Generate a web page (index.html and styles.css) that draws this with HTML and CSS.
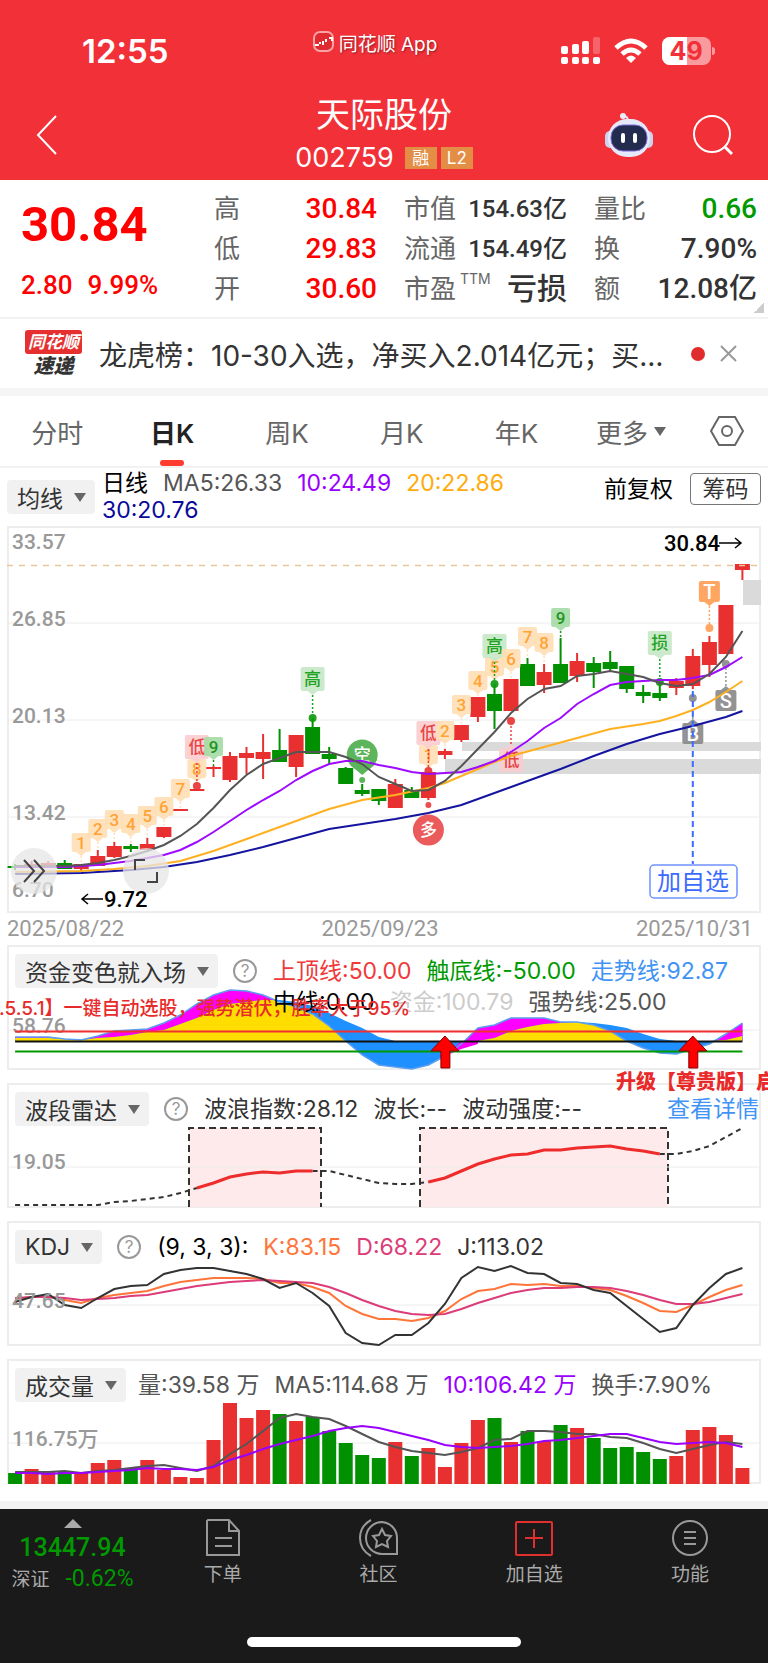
FILE: index.html
```html
<!DOCTYPE html>
<html lang="zh-CN">
<head>
    <meta charset="UTF-8">
    <meta name="viewport" content="width=device-width, initial-scale=1.0">
    <title>天际股份 002759</title>
    <link rel="stylesheet" href="styles.css">
</head>
<body>
    <header class="top">
        <div class="status-bar">
            <span class="time">12:55</span>
            <span class="app-name">
                <svg width="22" height="22" viewBox="0 0 22 22"><rect x="1" y="1" width="19" height="19" rx="6" fill="#e02a2f" stroke="#f9a3a5" stroke-width="2"/><path d="M2 14h4M7 11v2M10 10v4M13 8v3M16 7h3v3" fill="none" stroke="#fff" stroke-width="2"/></svg>
                同花顺 App
            </span>
            <span class="status-icons">
                <svg width="39" height="28" viewBox="0 0 39 28" fill="#fff"><rect y="9" width="7" height="8" rx="2"/><rect x="11" y="7" width="7" height="10" rx="2"/><rect x="21" y="4" width="7" height="13" rx="2"/><rect x="32" y="0" width="7" height="17" rx="2" opacity=".25"/><rect y="20" width="7" height="7" rx="2"/><rect x="11" y="20" width="7" height="7" rx="2"/><rect x="21" y="20" width="7" height="7" rx="2"/><rect x="32" y="20" width="7" height="7" rx="2"/></svg>
                <svg width="34" height="26" viewBox="0 0 34 26"><g fill="none" stroke="#fff" stroke-width="5"><path d="M2 10Q17-4 32 10"/><path d="M8 16Q17 8 26 16"/></g><path d="M17 25l-5-5q5-5 10 0z" fill="#fff"/></svg>
                <span class="battery"><b>4</b><b>9</b></span>
            </span>
        </div>
        <div class="title-bar">
            <button class="icon-btn" aria-label="返回">
                <svg width="24" height="42" viewBox="0 0 24 42"><path d="M21 2L3 21l18 19" fill="none" stroke="#fff" stroke-width="2"/></svg>
            </button>
            <div class="stock">
                <h1>天际股份</h1>
                <div class="stock-code">002759 <i>融</i><i>L2</i></div>
            </div>
            <div class="title-actions">
                <button class="icon-btn" aria-label="助手">
                    <svg width="48" height="46" viewBox="0 0 48 46"><path d="M23 9q0-5-5-5" fill="none" stroke="#dfe3f8" stroke-width="2"/><circle cx="18" cy="4" r="3" fill="#e9ecfb"/><rect x="0" y="19" width="10" height="17" rx="5" fill="#cdd3ee"/><rect x="38" y="19" width="10" height="17" rx="5" fill="#cdd3ee"/><rect x="3" y="7" width="42" height="38" rx="19" fill="#e6e9fa"/><rect x="6" y="13" width="36" height="26" rx="12" fill="#232c4e" stroke="#7b6bd8" stroke-width="1"/><rect x="16" y="21" width="4" height="10" rx="2" fill="#fff"/><rect x="28" y="21" width="4" height="10" rx="2" fill="#fff"/></svg>
                </button>
                <button class="icon-btn" aria-label="搜索">
                    <svg width="40" height="42" viewBox="0 0 40 42"><circle cx="19" cy="20" r="18" fill="none" stroke="#fff" stroke-width="2"/><path d="M32 33l7 7" stroke="#fff" stroke-width="3"/></svg>
                </button>
            </div>
        </div>
    </header>

    <section class="quote">
        <div class="price din">
            <strong>30.84</strong>
            <span>2.80</span><span>9.99%</span>
        </div>
        <dl class="q1 up"><dt>高</dt><dd>30.84</dd><dt>低</dt><dd>29.83</dd><dt>开</dt><dd>30.60</dd></dl>
        <dl class="q2"><dt>市值</dt><dd>154.63亿</dd><dt>流通</dt><dd>154.49亿</dd><dt>市盈<sup>TTM</sup></dt><dd class="big">亏损</dd></dl>
        <dl class="q3"><dt>量比</dt><dd class="down">0.66</dd><dt>换</dt><dd>7.90%</dd><dt>额</dt><dd>12.08亿</dd></dl>
    </section>

    <section class="news">
        <div class="news-logo"><b>同花顺</b><em>速递</em></div>
        <a href="#">龙虎榜：10-30入选，净买入2.014亿元；买…</a>
        <span class="dot"></span>
        <button class="icon-btn" aria-label="关闭">
            <svg width="17" height="17" viewBox="0 0 17 17"><path d="M1 1l15 15M16 1L1 16" stroke="#999" stroke-width="2"/></svg>
        </button>
    </section>

    <nav class="tabs">
        <a href="#">分时</a>
        <a href="#" class="active">日K</a>
        <a href="#">周K</a>
        <a href="#">月K</a>
        <a href="#">年K</a>
        <a href="#" class="more">更多</a>
        <a href="#" aria-label="设置">
            <svg width="34" height="30" viewBox="0 0 34 30" fill="none" stroke="#666" stroke-width="2"><path d="M9 1h16l8 14-8 14H9L1 15z"/><circle cx="17" cy="15" r="5"/></svg>
        </a>
    </nav>

    <main>
        <div class="ma-bar">
            <button class="pick">均线</button>
            <p class="legend">
                <span class="c-black">日线</span><span class="c-gray">MA5:26.33</span><span class="c-purple">10:24.49</span><span class="c-orange">20:22.86</span><span class="c-navy">30:20.76</span>
            </p>
            <span class="adjust">前复权</span>
            <button class="chips">筹码</button>
        </div>

        <section class="panel">
            <svg id="kline" class="chart" viewBox="7 525 754 387"></svg>
        </section>
        <div class="dates"><span>2025/08/22</span><span>2025/09/23</span><span>2025/10/31</span></div>

        <section class="panel">
            <svg id="fund" class="chart" viewBox="7 944 754 125"></svg>
            <div class="panel-head">
                <button class="pick">资金变色就入场</button>
                <button class="help">?</button>
                <p class="legend">
                    <span class="c-red">上顶线:50.00</span><span class="c-green">触底线:-50.00</span><span class="c-blue">走势线:92.87</span><span class="c-black">中线:0.00</span><span class="c-light">资金:100.79</span><span class="c-gray">强势线:25.00</span>
                </p>
            </div>
            <p class="ad ad-left">.5.5.1】一键自动选股，强势潜伏，胜率大于95%</p>
        </section>

        <section class="panel">
            <svg id="radar" class="chart" viewBox="7 1083 754 125"></svg>
            <div class="panel-head">
                <button class="pick">波段雷达</button>
                <button class="help">?</button>
                <p class="legend c-dark"><span>波浪指数:28.12</span><span>波长:--</span><span>波动强度:--</span></p>
                <a href="#" class="detail">查看详情</a>
            </div>
            <p class="ad ad-right">升级【尊贵版】启</p>
        </section>

        <section class="panel">
            <svg id="kdj" class="chart" viewBox="7 1220 754 125"></svg>
            <div class="panel-head">
                <button class="pick">KDJ</button>
                <button class="help">?</button>
                <p class="legend"><span class="c-black">(9, 3, 3):</span><span class="c-coral">K:83.15</span><span class="c-pink">D:68.22</span><span class="c-dark">J:113.02</span></p>
            </div>
        </section>

        <section class="panel">
            <svg id="volume" class="chart" viewBox="7 1358 754 125"></svg>
            <div class="panel-head">
                <button class="pick">成交量</button>
                <p class="legend c-gray"><span>量:39.58 万</span><span>MA5:114.68 万</span><span class="c-purple">10:106.42 万</span><span>换手:7.90%</span></p>
            </div>
        </section>
    </main>

    <footer class="bottom">
        <nav>
            <a href="#" class="index din">
                <i></i>
                <strong>13447.94</strong>
                <span><small>深证</small>-0.62%</span>
            </a>
            <a href="#">
                <svg width="36" height="38" viewBox="0 0 36 38" fill="none" stroke="#999" stroke-width="2"><path d="M3 1h21l10 11v24H2V2z"/><path d="M24 1v11h10M10 19h17M10 27h17"/></svg>
                下单
            </a>
            <a href="#">
                <svg width="42" height="38" viewBox="0 0 42 38" fill="none" stroke="#999" stroke-width="2"><path d="M13 1Q2 7 2 19t11 18"/><path d="M24 3a16 16 0 1 0 0 32h15V19A16 16 0 0 0 24 3z"/><path d="M24 10l3 6 6 1-4 5 1 6-6-3-6 3 1-6-4-5 6-1z"/></svg>
                社区
            </a>
            <a href="#">
                <svg width="38" height="38" viewBox="0 0 38 38" fill="none" stroke="#e02f2f" stroke-width="2"><rect x="1" y="3" width="36" height="33" rx="1"/><path d="M19 10v19M10 19h18"/></svg>
                加自选
            </a>
            <a href="#">
                <svg width="36" height="38" viewBox="0 0 36 38" fill="none" stroke="#999" stroke-width="2"><circle cx="18" cy="19" r="17"/><path d="M12 13h12M12 19h12M12 25h12"/></svg>
                功能
            </a>
        </nav>
        <div class="home-bar"></div>
    </footer>

    <script src="charts.js"></script>
</body>
</html>
```

FILE: styles.css
```css
* {
    box-sizing: border-box;
}
body {
    margin: 0;
    font-family: Inter, "Noto Sans CJK SC", sans-serif;
    background: #fff;
    color: #333;
    overflow-x: hidden;
}
h1, p, dl, dd {
    margin: 0;
}
a {
    color: inherit;
    text-decoration: none;
}
button {
    font: inherit;
    color: inherit;
    border: none;
    background: none;
    padding: 0;
    cursor: pointer;
}
svg {
    display: block;
}
.icon-btn {
    display: flex;
}
.din {
    font-family: Roboto, "Noto Sans CJK SC", sans-serif;
}

/* header */
.top {
    background: #f23038;
    color: #fff;
    padding-bottom: 6px;
}
.status-bar {
    display: grid;
    grid-template-columns: 1fr auto 1fr;
    align-items: center;
    height: 96px;
    padding: 6px 57px 0 39px;
}
.time {
    margin-left: 43px;
    font-size: 33px;
    font-weight: 600;
}
.app-name {
    display: flex;
    align-items: center;
    gap: 4px;
    font-size: 19px;
    padding-bottom: 18px;
    text-shadow: 1px 1px 2px rgba(0,0,0,0.4);
}
.status-icons {
    display: flex;
    justify-content: flex-end;
    align-items: center;
    gap: 14px;
}
.battery {
    display: flex;
    position: relative;
    width: 49px;
    height: 28px;
    line-height: 28px;
    border-radius: 8px;
    color: #f23038;
    font-size: 25px;
    background: #f99a9e;
}
.battery::after {
    content: "";
    position: absolute;
    right: -4px;
    top: 10px;
    width: 3px;
    height: 8px;
    border-radius: 0 3px 3px 0;
    background: #f99a9e;
}
.battery b {
    width: 25px;
}
.battery b:first-child {
    background: #fff;
    border-radius: 8px 0 0 8px;
    text-align: right;
}
.title-bar {
    display: grid;
    grid-template-columns: 1fr auto 1fr;
    align-items: center;
    height: 78px;
    padding: 0 35px;
}
.stock {
    margin: -8px 0;
    text-align: center;
}
.stock h1 {
    font-size: 34px;
    line-height: 46px;
    font-weight: 400;
}
.stock-code {
    display: flex;
    align-items: center;
    justify-content: center;
    gap: 4px;
    font-size: 27px;
    line-height: 40px;
}
.stock-code i {
    width: 32px;
    height: 22px;
    font-size: 17px;
    line-height: 22px;
    font-style: normal;
    background: #e48d45;
}
.stock-code i:first-of-type {
    margin-left: 7px;
}
.title-actions {
    display: flex;
    align-items: center;
    justify-content: flex-end;
    gap: 40px;
}

/* quote */
.quote {
    display: grid;
    grid-template-columns: 1fr repeat(3, 163px);
    column-gap: 27px;
    padding: 9px 11px 8px 21px;
    border-bottom: 2px solid #f2f2f2;
    background: linear-gradient(135deg, transparent 50%, #ccc 50%) right 4px bottom 4px / 10px 10px no-repeat;
}
.price {
    color: #f00;
    white-space: nowrap;
}
.price strong {
    display: block;
    font-size: 49px;
    line-height: 72px;
}
.price span {
    font-size: 26px;
    line-height: 48px;
    font-weight: 500;
    margin-right: 15px;
}
.quote dl {
    display: grid;
    grid-template-columns: auto 1fr;
    grid-auto-rows: 40px;
    line-height: 40px;
    white-space: nowrap;
}
.quote dt {
    position: relative;
    color: #666;
    font-size: 26px;
}
.quote sup {
    position: absolute;
    left: 100%;
    top: 0;
    margin-left: 4px;
    font-size: 14px;
    line-height: 20px;
}
.quote dd {
    font-family: Roboto, "Noto Sans CJK SC", sans-serif;
    font-size: 28px;
    font-weight: 500;
    text-align: right;
}
.quote .q2 dd {
    font-size: 24px;
}
.quote .q2 .big {
    font-size: 30px;
}
.up dd {
    color: #f00;
}
.quote .down {
    color: #090;
}

/* news */
.news {
    display: flex;
    align-items: center;
    height: 77px;
    padding: 0 31px 0 25px;
    border-bottom: 8px solid #f5f5f5;
}
.news-logo {
    width: 57px;
    margin-right: 17px;
    text-align: center;
}
.news-logo b {
    display: block;
    background: #e63030;
    color: #fff;
    font-size: 17px;
    line-height: 24px;
    font-style: italic;
    border-radius: 3px;
}
.news-logo em {
    display: block;
    font-size: 20px;
    line-height: 24px;
    font-weight: 900;
}
.news a {
    flex: 1;
    font-size: 28px;
    white-space: nowrap;
}
.dot {
    width: 14px;
    height: 14px;
    margin: 0 15px 0 24px;
    border-radius: 50%;
    background: #e02c2c;
}

/* tabs */
.tabs {
    display: grid;
    grid-template-columns: repeat(6, 15%) 1fr;
    height: 72px;
    padding-right: 3px;
    border-bottom: 2px solid #f2f2f2;
    font-size: 26px;
    color: #666;
}
.tabs a {
    display: flex;
    align-items: center;
    justify-content: center;
    position: relative;
}
.tabs .active {
    color: #222;
    font-weight: 600;
}
.tabs .active::after {
    content: "";
    position: absolute;
    bottom: 0;
    width: 24px;
    height: 6px;
    border-radius: 3px;
    background: #ff3b30;
}
.more::after,
.pick::after {
    content: "";
    border: 6px solid transparent;
    border-top: 9px solid #666;
    border-bottom: none;
    margin-left: 6px;
}

/* indicator header rows */
main {
    padding: 0 7px;
}
.pick {
    display: flex;
    align-items: center;
    height: 34px;
    padding: 0 9px 0 10px;
    font-size: 23px;
    color: #333;
    background: #f1f1f1;
    border-radius: 4px;
    white-space: nowrap;
}
.pick::after {
    margin-left: 11px;
}
.legend {
    display: flex;
    flex-wrap: wrap;
    column-gap: 15px;
    font-size: 23px;
    line-height: 31px;
}
.ma-bar {
    display: flex;
    align-items: center;
    height: 58px;
}
.ma-bar .legend {
    flex: 1;
    margin-left: 7px;
    padding-right: 30px;
    line-height: 27px;
}
.adjust {
    margin: 0 17px 20px 0;
    font-size: 23px;
    color: #000;
}
.chips {
    width: 71px;
    height: 32px;
    margin-bottom: 16px;
    font-size: 23px;
    line-height: 28px;
    border: 1px solid #777;
    border-radius: 4px;
}

/* panels: the chart and its header share one grid cell */
.panel {
    display: grid;
    position: relative;
    margin-bottom: 13px;
    box-shadow: inset 0 0 0 2px #ededed;
}
.panel > .chart,
.panel > .panel-head {
    grid-area: 1 / 1;
}
.chart {
    width: 100%;
    height: auto;
}
.panel-head {
    display: flex;
    align-items: flex-start;
    padding: 9px 2px 0 8px;
}
.panel-head .legend {
    flex: 1;
    margin: 2px 0 0 16px;
}
.panel-head .pick + .legend {
    margin-left: 12px;
}
.help {
    width: 24px;
    height: 24px;
    margin: 5px 0 0 15px;
    border: 2px solid #999;
    border-radius: 50%;
    color: #999;
    font-size: 17px;
    line-height: 20px;
}
.detail {
    font-size: 23px;
    line-height: 34px;
    color: #4193f5;
}
.dates {
    display: flex;
    justify-content: space-between;
    margin-top: -13px;
    font-family: Roboto, sans-serif;
    font-size: 22px;
    line-height: 32px;
    color: #999;
    padding-right: 8px;
}
.ad {
    position: absolute;
    color: #e92a2a;
    font-size: 19px;
    font-weight: 500;
    line-height: 24px;
    white-space: nowrap;
}
.ad-left {
    left: -8px;
    top: 52px;
}
.ad-right {
    left: 609px;
    top: -13px;
    font-size: 20px;
    font-weight: 900;
}
.c-black { color: #000; }
.c-dark { color: #333; }
.c-gray { color: #555; }
.c-light { color: #ccc; }
.c-purple { color: #90f; }
.c-orange { color: #ffab0a; }
.c-navy { color: #0a0a9a; }
.c-red { color: #f03a3a; }
.c-green { color: #090; }
.c-blue { color: #4193f5; }
.c-coral { color: #ff7438; }
.c-pink { color: #dc3c78; }

/* chart text */
.axis {
    font: 500 21px Roboto, "Noto Sans CJK SC", sans-serif;
    fill: #999;
}
.mark {
    font: 500 22px Roboto, sans-serif;
}
.tag-text {
    font: 500 17px Roboto, "Noto Sans CJK SC", sans-serif;
    text-anchor: middle;
}
.tag-text.letter {
    font-size: 20px;
}

/* bottom bar */
.bottom {
    height: 163px;
    margin-top: 17px;
    border-top: 8px solid #f3f3f3;
    background: #1a1a1a;
    color: #aaa;
}
.bottom nav {
    display: grid;
    grid-template-columns: 145px repeat(4, 1fr);
    height: 128px;
}
.bottom a {
    display: flex;
    flex-direction: column;
    align-items: center;
    gap: 4px;
    padding-top: 10px;
    font-size: 19px;
    line-height: 28px;
}
.bottom .index {
    gap: 0;
    color: #090;
}
.index i {
    border: 9px solid transparent;
    border-bottom: 9px solid #aaa;
    border-top: none;
}
.index strong {
    font-size: 25px;
    line-height: 40px;
    font-weight: 500;
}
.index span {
    font-size: 23px;
    line-height: 22px;
}
.index small {
    margin-right: 16px;
    font-size: 19px;
    color: #aaa;
}
.home-bar {
    width: 274px;
    height: 10px;
    margin: 0 auto;
    border-radius: 5px;
    background: #fff;
}
```

FILE: charts.js
```js
// All panels share one coordinate space, each svg shows its slice through its viewBox.
const RED = '#e83030', GREEN = '#009000';
const STEP = 16.53, X0 = 15.1;
const LEFT = 7, RIGHT = 761;

const x = i => +(X0 + i * STEP).toFixed(1);

function line(ys, color, width = 2, from = 0, dash = '') {
    const pts = ys.map((y, i) => `${x(i + from)},${y}`).join(' ');
    return `<polyline points="${pts}" fill="none" stroke="${color}" stroke-width="${width}" stroke-dasharray="${dash}"/>`;
}
// sparse series: [index, y] pairs
function curve(pairs, color) {
    return `<polyline points="${pairs.map(p => x(p[0]) + ',' + p[1]).join(' ')}" fill="none" stroke="${color}" stroke-width="2"/>`;
}
function grid(y) {
    return `<path d="M${LEFT} ${y}H${RIGHT}" stroke="#ececec"/>`;
}
function rect(x1, y1, w, h, fill, extra = '') {
    return `<rect x="${x1}" y="${y1}" width="${w}" height="${h}" fill="${fill}" ${extra}/>`;
}
function axis(y, text) {
    return `<text class="axis" x="12" y="${y}">${text}</text>`;
}

// ---- K line ----
// [up, bodyTop, bodyBottom, high, low]
const candles = [
    [0,865,867,863,869],[1,863,865,860,866],[1,862,864,860,865],[0,862,868,859,868],[1,863,868,863,870],
    [1,855,865,849,865],[1,845,856,841,857],[0,845,848,843,851],[1,843,849,837,849],[1,826,836,826,837],
    [1,808,810,808,810],[1,788,790,788,790],[1,766,768,765,776],[1,755,779,751,781],[1,752,757,746,773],
    [1,751,758,733,778],[0,749,761,728,761],[1,734,766,734,776],[0,726,753,717,753],[0,753,758,746,763],
    [0,767,783,766,783],[0,789,793,783,795],[0,788,800,788,804],[1,783,807,778,807],[0,789,797,786,797],
    [1,771,797,771,799],[1,750,754,748,758],[1,724,739,724,741],[1,696,716,696,721],[0,693,710,683,728],
    [1,678,710,678,710],[0,663,685,657,685],[1,671,684,663,692],[0,663,682,637,682],[1,660,675,652,681],
    [0,662,671,656,687],[0,661,668,650,670],[0,665,688,665,692],[0,691,695,684,702],[0,692,697,681,700],
    [1,680,687,677,694],[1,655,685,648,688],[1,641,664,635,676],[1,604,653,604,653],[1,563,569,563,579]
];
const ma5 = [865,865,865,865,864,862,859,855,850,844,835,823,807,789,774,763,757,751,751,751,756,763,776,783,790,789,780,765,748,731,712,698,688,685,675,673,670,673,676,682,685,683,673,656,630];
const ma10 = [866,866,866,866,865,864,862,860,857,854,849,841,831,820,809,799,790,779,770,763,760,760,764,767,771,773,772,771,766,760,751,740,727,717,703,693,684,681,680,679,679,677,674,666,656];
const ma20 = [[0,871],[4,870],[6,868],[8,865],[10,860],[12,850],[13,844],[15,832],[17,820],[19,808],[21,799],[23,794],[25,787],[26,782],[27,775],[28,768],[29,761],[30,755],[32,746],[34,737],[36,728],[38,723],[39,720],[40,715],[41,709],[42,701],[43,691],[44,680]];
const ma30 = [[0,873],[4,872],[7,869],[9,866],[11,861],[13,854],[15,846],[17,837],[19,828],[21,823],[23,818],[25,812],[27,804],[29,792],[31,780],[33,768],[35,755],[37,743],[39,733],[41,725],[43,716],[44,710]];

const TAGS = {
    num: ['#ffdfb5', '#ff9a1f', 19],
    high: ['#c6e8c6', '#0a9a0a', 24],
    nine: ['#a5dba5', '#0a8a0a', 19],
    low: ['#fbcdd0', '#e83030', 24],
    trade: ['#ff9d52', '#fff', 21],
    gray: ['#888', '#fff', 21]
};

// label box over (or under) a candle, dotted leader to y = end
function tag(i, top, text, kind, end, dot = false, below = false) {
    const [bg, fg, w] = TAGS[kind];
    const cx = x(i);
    const letter = fg === '#fff';
    const lead = letter || kind === 'num' ? bg : fg;
    const edge = below ? top : top + w;
    const tip = below ? edge - 4 : edge + 4;
    return `<g opacity=".9">
        <path d="M${cx} ${tip}V${end}" stroke="${lead}" stroke-width="1.5" stroke-dasharray="2 2"/>
        ${rect(cx - w / 2, top, w, w, bg, 'rx="2"')}
        <path d="M${cx - 5} ${edge}H${cx + 5}L${cx} ${tip}z" fill="${bg}"/>
        <text class="tag-text ${letter ? 'letter' : ''}" x="${cx}" y="${top + w / 2 + (letter ? 7 : 6)}" fill="${fg}">${text}</text>
        ${dot ? `<circle cx="${cx}" cy="${end}" r="4" fill="${lead}"/>` : ''}
    </g>`;
}

function drawKline() {
    let s = [622, 719, 816].map(grid).join('');
    s += axis(548, '33.57') + axis(625, '26.85') + axis(722, '20.13') + axis(819, '13.42') + axis(896, '6.70');
    s += rect(462, 741, 299, 9, '#dadada') + rect(445, 758, 316, 15, '#dadada') + rect(743, 579, 18, 25, '#dadada');

    candles.forEach(([up, top, bottom, high, low], i) => {
        const c = up ? RED : GREEN;
        s += `<path d="M${x(i)} ${high}V${low}" stroke="${c}" stroke-width="2"/>`;
        s += rect(x(i) - 7.5, top, 15, bottom - top, c);
    });

    s += tag(4, 832, '1', 'num', 863) + tag(5, 818, '2', 'num', 849) + tag(6, 809, '3', 'num', 841)
       + tag(7, 813, '4', 'num', 843) + tag(8, 805, '5', 'num', 837) + tag(9, 796, '6', 'num', 826)
       + tag(10, 778, '7', 'num', 808) + tag(11, 758, '8', 'num', 785)
       + tag(11, 734, '低', 'low', 785, true) + tag(12, 736, '9', 'nine', 765)
       + tag(18, 666, '高', 'high', 717, true);
    s += tag(25, 744, '1', 'num', 770) + tag(25, 720, '低', 'low', 770, true) + tag(26, 720, '2', 'num', 748)
       + tag(27, 694, '3', 'num', 724) + tag(28, 670, '4', 'num', 696) + tag(29, 656, '5', 'num', 683)
       + tag(29, 633, '高', 'high', 683, true) + tag(30, 648, '6', 'num', 678)
       + tag(30, 747, '低', 'low', 720, true, true) + tag(31, 626, '7', 'num', 657)
       + tag(32, 632, '8', 'num', 663) + tag(33, 607, '9', 'nine', 637)
       + tag(39, 630, '损', 'high', 681, true) + tag(42, 580, 'T', 'trade', 627, true)
       + tag(43, 689, 'S', 'gray', 663, true, true) + tag(41, 722, 'B', 'gray', 697, true, true);

    // bull / bear turning points
    s += `<g opacity=".85"><path d="M${x(21) - 12} 764L${x(21)} 774l12-10z" fill="#3fa83f"/><circle cx="${x(21)}" cy="754" r="15.5" fill="#3fa83f"/><circle cx="${x(21)}" cy="779" r="3" fill="#3fa83f"/>
        <circle cx="${x(25)}" cy="829" r="15.5" fill="#e83f3f"/><circle cx="${x(25)}" cy="804" r="3" fill="${RED}"/></g>
        <text class="tag-text" x="${x(21)}" y="760" fill="#fff">空</text>
        <text class="tag-text" x="${x(25)}" y="835" fill="#fff">多</text>`;

    s += curve(ma30, '#1414a0') + curve(ma20, '#ffb020') + line(ma10, '#9d0cff') + line(ma5, '#555');

    s += `<path d="M${LEFT} 564.5H${RIGHT}" stroke="#e6c79c" stroke-width="1.5" stroke-dasharray="6 6"/>`;
    s += `<path d="M${x(41)} 690V863" stroke="#3b6bff" stroke-width="2" stroke-dasharray="6 4"/>
        <rect x="650" y="864" width="87" height="33" rx="4" fill="#fff" stroke="#6f93ff" stroke-width="1.5"/>
        <text x="693" y="889" font-size="24" text-anchor="middle" fill="#3b6bff">加自选</text>`;
    s += `<g fill="#e6e6e6" fill-opacity=".75"><circle cx="34" cy="870" r="23"/><circle cx="146" cy="870" r="23"/></g>
        <path d="M24 859l10 11-10 11M34 859l10 11-10 11M135 869v-10h10M157 871v10h-10" fill="none" stroke="#444" stroke-width="2"/>`;
    s += `<text class="mark" x="664" y="550">30.84</text><path d="M719 542h22m-6-5l6 5-6 5" fill="none" stroke="#000" stroke-width="1.5"/>
        <text class="mark" x="104" y="906">9.72</text><path d="M103 898H82m6-5l-6 5 6 5" fill="none" stroke="#000" stroke-width="1.5"/>`;
    document.getElementById('kline').innerHTML = s;
}

// ---- fund colour panel ----
const trend = [1036,1036,1036,1038,1039,1035,1030,1029,1028,1022,1014,1003,994,989,990,994,1001,1006,1013,1025,1040,1054,1064,1066,1068,1064,1055,1043,1027,1024,1017,1017,1017,1021,1021,1024,1030,1040,1047,1052,1053,1048,1043,1033,1022];
const money = [1037,1037,1037,1038,1039,1037,1036,1034,1031,1029,1023,1017,1009,1003,1001,999,999,1001,1005,1012,1020,1027,1036,1040,1040,1040,1040,1040,1040,1037,1030,1026,1023,1022,1021,1022,1024,1027,1033,1038,1040,1040,1040,1039,1035];

function drawFund() {
    const area = ys => `M${x(0)} 1040` + ys.map((y, i) => `L${x(i)} ${y}`).join('') + `L${x(44)} 1040z`;
    const arrow = i => `<path d="M${x(i)} 1035l14 15h-9v17h-9v-17h-10z" fill="#f00" stroke="#800" stroke-width="1"/>`;
    document.getElementById('fund').innerHTML = grid(1029) + axis(1032, '58.76') + `
        <clipPath id="above"><rect x="0" y="940" width="768" height="100"/></clipPath>
        <clipPath id="money"><path d="${area(money)}"/></clipPath>
        <path d="${area(trend)}" fill="#1e90ff"/>
        <path d="${area(trend)}" fill="#f0f" clip-path="url(#above)"/>
        <path d="M${x(26)} 1055L${x(27)} 1040H${x(28)}V1043L${x(27)} 1048z" fill="#f0f"/>
        <path d="${area(money)}" fill="#1e90ff"/>
        <g clip-path="url(#above)"><path d="${area(trend)}" fill="#fd0" clip-path="url(#money)"/></g>
        ${line(trend, '#5b9df0', 1.5)}
        <path d="M${x(0)} 1030.5H${x(44)}" stroke="#f03030" stroke-width="2"/>
        <path d="M${x(0)} 1040.5H${x(44)}" stroke="#111" stroke-width="2"/>
        <path d="M${x(0)} 1050.5H${x(44)}" stroke="#090" stroke-width="2"/>
        ${arrow(26)}${arrow(41)}`;
}

// ---- wave radar ----
const wave = [1205,1205,1205,1205,1205,1205,1202,1201,1199,1197,1193,1188,1183,1177,1174,1172,1173,1171,1171,1171,1175,1179,1183,1184,1184,1182,1178,1171,1164,1159,1155,1154,1150,1150,1148,1147,1146,1149,1151,1154,1154,1151,1146,1137,1128];

function drawRadar() {
    const box = (x1, x2) => rect(x1, 1128, x2 - x1, 79, '#feeaea') +
        `<path d="M${x1} 1207V1128H${x2}V1207" fill="none" stroke="#333" stroke-width="2" stroke-dasharray="7 4"/>`;
    document.getElementById('radar').innerHTML =
        box(189, 321) + box(420, 668) + grid(1167) + axis(1169, '19.05') +
        line(wave.slice(0, 12), '#333', 2, 0, '5 4') +
        line(wave.slice(18, 26), '#333', 2, 18, '5 4') +
        line(wave.slice(39), '#333', 2, 39, '5 4') +
        line(wave.slice(11, 19), '#ee2c2c', 3, 11) +
        line(wave.slice(25, 40), '#ee2c2c', 3, 25);
}

// ---- KDJ ----
const k = [1298,1296,1296,1299,1302,1297,1294,1292,1290,1285,1281,1279,1277,1277,1277,1278,1282,1282,1286,1292,1305,1313,1318,1318,1320,1317,1310,1298,1290,1288,1283,1284,1283,1285,1285,1287,1289,1295,1302,1310,1311,1304,1296,1289,1284];
const d = [1297,1296,1296,1297,1299,1298,1297,1295,1294,1291,1288,1285,1283,1281,1280,1279,1280,1281,1282,1286,1292,1299,1305,1310,1313,1314,1313,1308,1302,1297,1292,1289,1287,1287,1286,1286,1287,1290,1294,1299,1303,1303,1301,1297,1293];
const j = [1301,1296,1293,1304,1307,1297,1288,1285,1284,1273,1269,1267,1267,1270,1273,1278,1287,1282,1292,1305,1332,1342,1344,1334,1334,1322,1303,1277,1266,1270,1265,1272,1273,1282,1283,1289,1292,1305,1318,1331,1327,1304,1287,1273,1267];

function drawKdj() {
    document.getElementById('kdj').innerHTML = grid(1304) + line(k, '#ff7438') + line(d, '#dc3c78') + line(j, '#333') + axis(1307, '47.65');
}

// ---- volume ----
const tops = [1472,1468,1471,1471,1472,1462,1459,1467,1459,1469,1476,1477,1439,1402,1417,1409,1413,1420,1416,1430,1442,1454,1457,1441,1455,1447,1466,1442,1419,1417,1441,1430,1440,1424,1427,1437,1447,1446,1451,1458,1455,1429,1426,1434,1467];
const falling = [0,3,7,16,18,19,20,21,22,24,29,31,33,35,36,37,38,39];
const vol5 = [1471,1471,1471,1470,1472,1470,1469,1467,1465,1464,1467,1470,1465,1453,1443,1430,1417,1413,1416,1418,1425,1433,1441,1446,1450,1452,1454,1451,1447,1439,1438,1430,1430,1431,1433,1433,1436,1437,1442,1448,1452,1448,1444,1441,1443];
const vol10 = [1472,1472,1473,1472,1472,1471,1470,1469,1467,1468,1468,1469,1466,1459,1454,1448,1443,1439,1435,1430,1427,1425,1427,1431,1435,1439,1444,1446,1447,1446,1445,1443,1440,1439,1437,1435,1433,1433,1437,1441,1443,1442,1441,1442,1446];

function drawVolume() {
    const bars = tops.map((y, i) => rect(x(i) - 7, y, 14, 1483 - y, falling.includes(i) ? GREEN : RED)).join('');
    document.getElementById('volume').innerHTML = grid(1442) + bars + line(vol5, '#555') + line(vol10, '#90f') + axis(1445, '116.75万');
}

drawKline();
drawFund();
drawRadar();
drawKdj();
drawVolume();
```
